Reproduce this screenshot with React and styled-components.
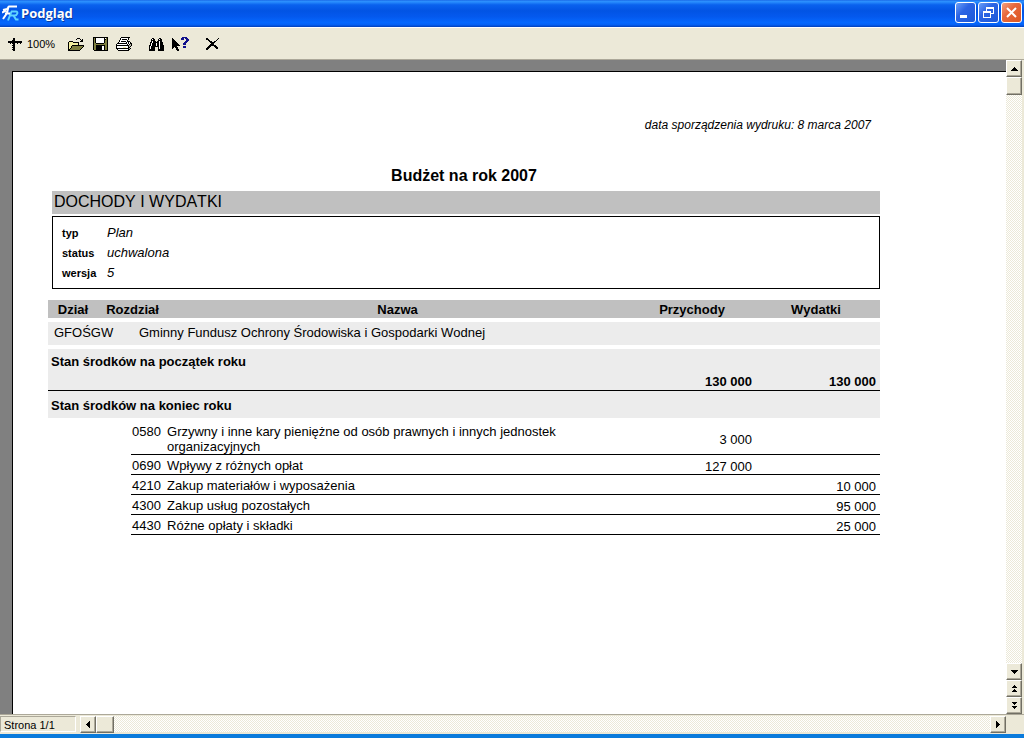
import React from 'react';
import styled, { createGlobalStyle, css } from 'styled-components';

const GlobalStyle = createGlobalStyle`
	* {
		box-sizing: border-box;
	}

	body {
		margin: 0;
		background: #ece9d8;
		color: #000;
		font-family: "Liberation Sans", Arial, sans-serif;
		font-size: 13px;
		font-kerning: none;
	}

	button {
		font: inherit;
		color: inherit;
		padding: 0;
		border: 0;
	}
`;

const Window = styled.div`
	display: flex;
	flex-direction: column;
	min-height: 100vh;
	border-bottom: 4px solid #0a7bdc;
`;

const TitleBar = styled.header`
	display: flex;
	align-items: center;
	gap: 2px;
	height: 27px;
	padding: 0 2px 2px 2px;
	background: linear-gradient(
		to bottom,
		#1c6ce8 0%,
		#2c92ff 6%,
		#0a62ee 18%,
		#0254e4 40%,
		#0459ee 62%,
		#0568fe 84%,
		#0560f4 92%,
		#0340b8 100%
	);
`;

const TitleText = styled.h1`
	flex: 1;
	margin: 0;
	color: #fff;
	font-family: "Open Sans", "Noto Sans", sans-serif;
	font-size: 13px;
	font-weight: bold;
	line-height: 20px;
	text-shadow: 1px 1px #0c3a9c;
`;

const Captions = styled.div`
	display: flex;
	gap: 2px;
`;

const CaptionButton = styled.button`
	display: flex;
	width: 21px;
	height: 21px;
	border: 1px solid #fff;
	border-radius: 3px;
	background: ${({ $close }) => $close
		? 'linear-gradient(135deg, #f0a080, #e8683c 40%, #dc5824)'
		: 'linear-gradient(135deg, #6ca0f8, #2c64e4 40%, #1c58d8)'};
`;

const Toolbar = styled.div`
	display: flex;
	align-items: center;
	gap: 8px;
	height: 33px;
	padding: 1px 8px 0;
	border-top: 1px solid #fff;
	border-bottom: 1px solid #aca899;
	background: #ece9d8;
`;

const ToolGroup = styled.div`
	display: flex;
`;

const ToolButton = styled.button`
	display: flex;
	align-items: center;
	justify-content: center;
	width: 24px;
	height: 24px;
	background: transparent;
`;

const ZoomButton = styled(ToolButton)`
	justify-content: flex-start;
	gap: 5px;
	width: 48px;
	font-size: 11px;
`;

const Workspace = styled.div`
	flex: 1;
	display: flex;
	padding-right: 2px;
`;

const Desk = styled.main`
	flex: 1;
	display: flex;
	padding: 11px 0 0 12px;
	background: #808080;
`;

const Paper = styled.article`
	flex: 1;
	padding: 45px 126px 40px 35px;
	border-top: 1px solid #000;
	border-left: 1px solid #000;
	background: #fff;
`;

const PrintDate = styled.p`
	margin: 0;
	padding-right: 9px;
	font-size: 12px;
	font-style: italic;
	line-height: 16px;
	text-align: right;
`;

const ReportTitle = styled.h2`
	margin: 33px 0 5px;
	font-size: 16px;
	line-height: 20px;
	text-align: center;
`;

const SectionBar = styled.h3`
	margin: 0 0 2px 4px;
	padding: 1px 2px 2px;
	background: #c0c0c0;
	font-size: 16px;
	font-weight: normal;
	line-height: 20px;
`;

const Summary = styled.dl`
	display: grid;
	grid-template-columns: 45px 1fr;
	margin: 0 0 11px 4px;
	padding: 6px 9px 5px;
	border: 1px solid #000;
	line-height: 20px;
`;

const SummaryLabel = styled.dt`
	font-size: 11px;
	font-weight: bold;
`;

const SummaryValue = styled.dd`
	margin: 0;
	font-style: italic;
`;

const Table = styled.table`
	width: 100%;
	table-layout: fixed;
	border-collapse: separate;
	border-spacing: 0;
	line-height: 15px;
`;

const Col = styled.col`
	width: ${({ $width }) => $width ? `${$width}px` : 'auto'};
`;

const HeadCell = styled.th`
	height: 22px;
	padding: 0 4px 0 0;
	border-bottom: 4px solid #fff;
	background: #c0c0c0;
`;

const Cell = styled.td`
	padding: 0;
	text-align: left;
	vertical-align: middle;
`;

const GroupCell = styled(Cell)`
	height: 27px;
	padding: 0 0 2px ${({ $indent }) => $indent}px;
	border-bottom: 4px solid #fff;
	background: #ececec;
`;

const TotalCell = styled(Cell)`
	height: ${({ $short }) => $short ? '30px' : '42px'};
	padding: ${({ $short }) => $short ? '7px' : '5px'} 4px 1px 3px;
	border-bottom: ${({ $short }) => $short ? '3px solid #fff' : '1px solid #000'};
	background: #ececec;
	font-weight: bold;
	vertical-align: top;

	${({ $amount }) => $amount && css`
		text-align: right;
		vertical-align: bottom;
	`}
`;

const ItemCell = styled(Cell)`
	height: 20px;
	padding: 3px 4px 0 ${({ $code }) => $code ? '1px' : '0'};
	border-bottom: 1px solid #000;
	text-align: ${({ $amount }) => $amount ? 'right' : 'left'};
	vertical-align: ${({ $amount }) => $amount ? 'middle' : 'top'};
`;

const ItemName = styled.span`
	display: block;
	max-width: 400px;
`;

const face = css`
	border: 1px solid;
	border-color: #fff #716f64 #716f64 #fff;
	box-shadow: inset -1px -1px #aca899;
	background: #ece9d8;
`;

const Track = styled.div`
	display: flex;
	flex: ${({ $vertical }) => $vertical ? 'none' : 1};
	flex-direction: ${({ $vertical }) => $vertical ? 'column' : 'row'};
	background: repeating-conic-gradient(#fff 0 25%, #ece9d8 0 50%) 0 0 / 2px 2px;
`;

const ScrollButton = styled.button`
	${face}
	display: flex;
	align-items: center;
	justify-content: center;
	flex: none;
	width: 16px;
	height: 17px;
`;

const Thumb = styled.div`
	${face}
	flex: none;
	width: ${({ $vertical }) => $vertical ? 16 : 18}px;
	height: ${({ $vertical }) => $vertical ? 18 : 17}px;
`;

const TrackSpace = styled.div`
	flex: 1;
`;

const StatusBar = styled.footer`
	display: flex;
	gap: 4px;
	height: 20px;
	padding: 1px 18px 2px 0;
	border-top: 1px solid #aca899;
	background: #ece9d8;
`;

const PageCount = styled.div`
	width: 76px;
	padding-left: 3px;
	border: 1px solid;
	border-color: #aca899 #fff #fff #aca899;
	font-size: 11px;
	line-height: 17px;
`;

const palette = {
	k: '#000',
	o: '#808040',
	y: '#f4f0a0',
	w: '#fff',
	g: '#b8b8a8',
	b: '#10108c'
};

const art = {
	ruler: [
		'.....kk.......',
		'.....kk.......',
		'....kkk.......',
		'kkkkkkkkkkkkkk',
		'kkkkkkkkkkkkkk',
		'..k.kkk..k..k.',
		'.....kk.......',
		'....kkk.......',
		'.....kk.......',
		'....kkk.......',
		'.....kk.......',
		'....kkk.......',
		'.....kk.......'
	],
	open: [
		'.........kkk....',
		'........k...k.k.',
		'.............kk.',
		'.kkkk.......kkk.',
		'kyyyykkkkkk.....',
		'kyyyyyyyyyk.....',
		'kyyyyyyyyyk.....',
		'kyyykkkkkkkkkkkk',
		'kyykoooooooooook',
		'kyykooooooooook.',
		'kykooooooooook..',
		'kkooooooooook...',
		'kkkkkkkkkkkk....'
	],
	save: [
		'kkkkkkkkkkkkkkk',
		'kokwwwwwwwwkwok',
		'kokwwwwwwwwkkok',
		'kokwwwwwwwwkook',
		'kokwwwwwwwwkook',
		'kokwwwwwwwwkook',
		'kookkkkkkkkoook',
		'koooooooooooook',
		'kookkkkkkkkkook',
		'kookkkkkkwwkook',
		'kookkkkkkwwkook',
		'kookkkkkkwwkook',
		'kookkkkkkwwkook',
		'.kkkkkkkkkkkkkk'
	],
	print: [
		'.....kkkkkkkkk..',
		'....kwwwwwwwk...',
		'....kwkkkkkwk...',
		'...kwwwwwwwk....',
		'...kwkkkkkwkkk..',
		'..kwwwwwwwkwkwk.',
		'.kkkkkkkkkkwkwkk',
		'kwwwwwwwwwwkwkgk',
		'kkkkkkkkkkkkkggk',
		'kwwwwwwwwwwwkgk.',
		'kwwwwwwyyywwkk..',
		'kkkkkkkkkkkkkgk.',
		'.kwwwwwwwwwwkk..',
		'..kkkkkkkkkkk...'
	],
	find: [
		'...kk.....kk...',
		'..kwkk...kwkk..',
		'..kkkk...kkkk..',
		'..kwkkk.kkwkk..',
		'.kkwkkkkkkwkkk.',
		'.kwkkkkwkkwkkk.',
		'.kwkkkkwkkwkkk.',
		'kkwkkkkwkkwkkkk',
		'kwkkkkkkkkwkkkk',
		'kwkkkk...kwkkkk',
		'kwkkkk...kwkkkk',
		'kkkkkk...kkkkkk',
		'kkkkkk...kkkkkk'
	],
	help: [
		'..........bbbbb..',
		'k........bbb.bbb.',
		'kk.......bbb..bbb',
		'kkk...........bbb',
		'kkkk.........bbb.',
		'kkkkk.......bbb..',
		'kkkkkk.....bbb...',
		'kkkkkkk....bbb...',
		'kkkkkkkk.........',
		'kkkkk......bbb...',
		'kk.kkk.....bbb...',
		'k...kk...........',
		'....kkk..........',
		'.....kk..........'
	],
	close: [
		'kk..........k',
		'kkk........k.',
		'..kk......k..',
		'...kkk..kk...',
		'....kkkkk....',
		'.....kkk.....',
		'....kkkk.....',
		'...kkkkkkk...',
		'..kkk...kkk..',
		'.kkk.....kkk.',
		'kkk.......kk.',
		'kk...........'
	],
	up: ['...k...', '..kkk..', '.kkkkk.', 'kkkkkkk'],
	down: ['kkkkkkk', '.kkkkk.', '..kkk..', '...k...'],
	pageUp: ['..k..', '.kkk.', 'kkkkk', '.....', '..k..', '.kkk.', 'kkkkk'],
	pageDown: ['kkkkk', '.kkk.', '..k..', '.....', 'kkkkk', '.kkk.', '..k..'],
	left: ['...k', '..kk', '.kkk', 'kkkk', '.kkk', '..kk', '...k'],
	right: ['k...', 'kk..', 'kkk.', 'kkkk', 'kkk.', 'kk..', 'k...']
};

const PixelIcon = ({ name }) => {
	const rows = art[name];
	const width = rows[0].length;

	return (
		<svg width={width} height={rows.length} viewBox={`0 0 ${width} ${rows.length}`} shapeRendering="crispEdges" aria-hidden="true">
			{ rows.map((row, y) => row.split('').map((dot, x) => (
				palette[dot] && <rect key={`${x}-${y}`} x={x} y={y} width="1" height="1" fill={palette[dot]} />
			)))}
		</svg>
	);
};

const Logo = () => (
	<svg width="17" height="18" viewBox="0 0 17 18" fill="none" aria-hidden="true">
		<path d="M9 7.5h5c2.5 0 1.5 4-1.5 4h-4M9.5 7.5l-3.5 9M11.500 11.5l2.500 4h2.500" stroke="#5fd4ff" strokeWidth="2" />
		<path d="M1 6l4-1 2-2.5h8M6.5 2.500 5 9l-4 6M3 9.500h5M0 8.500l4-2" stroke="#fff" strokeWidth="2" />
	</svg>
);

const MinimizeIcon = () => (
	<svg width="19" height="19" viewBox="0 0 19 19" aria-hidden="true">
		<path d="M4 12h7v3H4z" fill="#fff" />
	</svg>
);

const RestoreIcon = () => (
	<svg width="19" height="19" viewBox="0 0 19 19" fill="none" stroke="#fff" shapeRendering="crispEdges" aria-hidden="true">
		<path d="M7.5 8V4.5h7v6H12M7 5.5h8M4.5 8.5h7v6h-7zM4 9.5h8" />
	</svg>
);

const CloseIcon = () => (
	<svg width="19" height="19" viewBox="0 0 19 19" fill="none" stroke="#fff" strokeWidth="2" aria-hidden="true">
		<path d="m5 5 9 9M14 5l-9 9" />
	</svg>
);

const summary = [
	{ label: 'typ', value: 'Plan' },
	{ label: 'status', value: 'uchwalona' },
	{ label: 'wersja', value: '5' }
];

const items = [
	{ code: '0580', name: 'Grzywny i inne kary pieniężne od osób prawnych i innych jednostek organizacyjnych', income: '3 000' },
	{ code: '0690', name: 'Wpływy z różnych opłat', income: '127 000' },
	{ code: '4210', name: 'Zakup materiałów i wyposażenia', expense: '10 000' },
	{ code: '4300', name: 'Zakup usług pozostałych', expense: '95 000' },
	{ code: '4430', name: 'Różne opłaty i składki', expense: '25 000' }
];

const Report = () => (
	<Paper>
		<PrintDate>data sporządzenia wydruku: 8 marca 2007</PrintDate>
		<ReportTitle>Budżet na rok 2007</ReportTitle>
		<SectionBar>DOCHODY I WYDATKI</SectionBar>

		<Summary>
			{ summary.map(({ label, value }) => (
				<React.Fragment key={label}>
					<SummaryLabel>{label}</SummaryLabel>
					<SummaryValue>{value}</SummaryValue>
				</React.Fragment>
			))}
		</Summary>

		<Table>
			<colgroup>
				<Col $width={54} />
				<Col $width={29} />
				<Col $width={36} />
				<Col />
				<Col $width={124} />
				<Col $width={124} />
			</colgroup>
			<thead>
				<tr>
					<HeadCell scope="col">Dział</HeadCell>
					<HeadCell scope="col" colSpan="2">Rozdział</HeadCell>
					<HeadCell scope="col">Nazwa</HeadCell>
					<HeadCell scope="col">Przychody</HeadCell>
					<HeadCell scope="col">Wydatki</HeadCell>
				</tr>
			</thead>
			<tbody>
				<tr>
					<GroupCell colSpan="2" $indent={6}>GFOŚGW</GroupCell>
					<GroupCell colSpan="4" $indent={8}>Gminny Fundusz Ochrony Środowiska i Gospodarki Wodnej</GroupCell>
				</tr>
				<tr>
					<TotalCell colSpan="4">Stan środków na początek roku</TotalCell>
					<TotalCell $amount>130 000</TotalCell>
					<TotalCell $amount>130 000</TotalCell>
				</tr>
				<tr>
					<TotalCell colSpan="6" $short>Stan środków na koniec roku</TotalCell>
				</tr>
				{ items.map(({ code, name, income, expense }) => (
					<tr key={code}>
						<Cell colSpan="2" />
						<ItemCell $code>{code}</ItemCell>
						<ItemCell><ItemName>{name}</ItemName></ItemCell>
						<ItemCell $amount>{income}</ItemCell>
						<ItemCell $amount>{expense}</ItemCell>
					</tr>
				))}
			</tbody>
		</Table>
	</Paper>
);

const App = () => (
	<Window>
		<GlobalStyle />

		<TitleBar>
			<Logo />
			<TitleText>Podgląd</TitleText>
			<Captions>
				<CaptionButton type="button" aria-label="Minimalizuj"><MinimizeIcon /></CaptionButton>
				<CaptionButton type="button" aria-label="Przywróć"><RestoreIcon /></CaptionButton>
				<CaptionButton type="button" aria-label="Zamknij" $close><CloseIcon /></CaptionButton>
			</Captions>
		</TitleBar>

		<Toolbar>
			<ZoomButton type="button"><PixelIcon name="ruler" />100%</ZoomButton>
			<ToolGroup>
				<ToolButton type="button" aria-label="Otwórz"><PixelIcon name="open" /></ToolButton>
				<ToolButton type="button" aria-label="Zapisz"><PixelIcon name="save" /></ToolButton>
				<ToolButton type="button" aria-label="Drukuj"><PixelIcon name="print" /></ToolButton>
			</ToolGroup>
			<ToolGroup>
				<ToolButton type="button" aria-label="Znajdź"><PixelIcon name="find" /></ToolButton>
				<ToolButton type="button" aria-label="Pomoc"><PixelIcon name="help" /></ToolButton>
			</ToolGroup>
			<ToolButton type="button" aria-label="Zamknij podgląd"><PixelIcon name="close" /></ToolButton>
		</Toolbar>

		<Workspace>
			<Desk>
				<Report />
			</Desk>
			<Track $vertical>
				<ScrollButton type="button" aria-label="W górę"><PixelIcon name="up" /></ScrollButton>
				<Thumb $vertical />
				<TrackSpace />
				<ScrollButton type="button" aria-label="W dół"><PixelIcon name="down" /></ScrollButton>
				<ScrollButton type="button" aria-label="Poprzednia strona"><PixelIcon name="pageUp" /></ScrollButton>
				<ScrollButton type="button" aria-label="Następna strona"><PixelIcon name="pageDown" /></ScrollButton>
			</Track>
		</Workspace>

		<StatusBar>
			<PageCount>Strona 1/1</PageCount>
			<Track>
				<ScrollButton type="button" aria-label="W lewo"><PixelIcon name="left" /></ScrollButton>
				<Thumb />
				<TrackSpace />
				<ScrollButton type="button" aria-label="W prawo"><PixelIcon name="right" /></ScrollButton>
			</Track>
		</StatusBar>
	</Window>
);

export default App;
